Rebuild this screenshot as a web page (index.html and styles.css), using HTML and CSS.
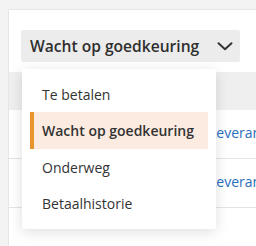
FILE: index.html
```html
<!DOCTYPE html>
<html>
<head>
<meta charset="utf-8">
<link rel="stylesheet" href="styles.css">
</head>
<body>
<div class="card">
  <div class="filter">
    <button class="select">
      <span class="select-label">Wacht op goedkeuring</span>
      <svg class="chev" width="16" height="9" viewBox="0 0 16 9"><path d="M1.5 1.2 L8 7.3 L14.5 1.2" fill="none" stroke="#333" stroke-width="1.9" stroke-linecap="round" stroke-linejoin="round"/></svg>
    </button>
    <ul class="menu">
      <li class="item">Te betalen</li>
      <li class="item active">Wacht op goedkeuring</li>
      <li class="item">Onderweg</li>
      <li class="item">Betaalhistorie</li>
    </ul>
  </div>
  <div class="table">
    <div class="thead"></div>
    <div class="row"><a class="link">Leverancier</a></div>
    <div class="row"><a class="link">Leverancier</a></div>
    <div class="row last"></div>
  </div>
</div>
</body>
</html>
```
FILE: styles.css
```css
html, body {
  margin: 0;
  padding: 0;
  background: #f3f3f3;
  font-family: "Open Sans", "Noto Sans", sans-serif;
  color: #333;
  overflow: hidden;
}
body {
  padding: 9px 0 0 8px;
  height: 246px;
  box-sizing: border-box;
}
.card {
  background: #fff;
  border: 1px solid #e6e6e6;
  border-right: none;
  height: 300px;
}
.filter {
  position: relative;
  padding: 20px 0 10px 12px;
}
.select {
  display: flex;
  align-items: center;
  justify-content: space-between;
  width: 219px;
  height: 32px;
  box-sizing: border-box;
  padding: 0 7px 0 9px;
  border: none;
  border-radius: 2px;
  background: #ececec;
  font-family: inherit;
  font-size: 15.6px;
  font-weight: 600;
  color: #2f2f2f;
}
.chev { display: block; }
.menu {
  position: absolute;
  left: 13px;
  top: 59px;
  width: 194px;
  margin: 0;
  padding: 7px 8px 8px;
  box-sizing: border-box;
  list-style: none;
  background: #fff;
  border-radius: 2px;
  box-shadow: 0 3px 14px rgba(0, 0, 0, 0.13);
  z-index: 2;
}
.item {
  height: 36px;
  display: flex;
  align-items: center;
  padding-left: 12px;
  font-size: 14px;
  color: #333;
}
.item.active {
  background: #fcebe0;
  border-left: 4px solid #e8952e;
  padding-left: 8px;
  font-weight: 600;
  height: 37px;
}
.table {
  display: flex;
  flex-direction: column;
}
.thead {
  height: 38px;
  background: #efefef;
}
.row {
  border-bottom: 1px solid #e4e4e4;
  display: flex;
  align-items: center;
  padding-left: 200px;
  padding-bottom: 3px;
  box-sizing: border-box;
  height: 49px;
}
.row.last { border-bottom: none; }
.link {
  color: #2a6ebd;
  font-size: 14px;
  white-space: nowrap;
}
```
